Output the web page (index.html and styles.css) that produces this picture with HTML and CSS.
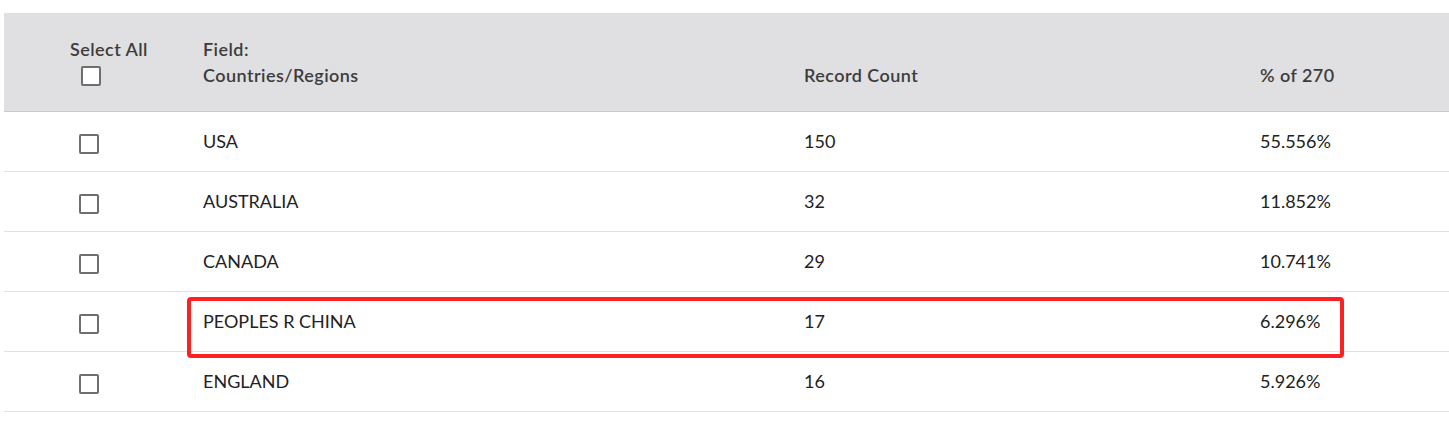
FILE: index.html
```html
<!DOCTYPE html>
<html lang="en">
<head>
<meta charset="utf-8">
<title>Countries/Regions</title>
<link rel="stylesheet" href="styles.css">
</head>
<body>
<div class="wrap">
  <table class="results">
    <thead>
      <tr>
        <th class="c-sel">
          <div class="sel-label">Select All</div>
          <span class="box box-head"></span>
        </th>
        <th class="c-field">Field:<br>Countries/Regions</th>
        <th class="c-count">Record Count</th>
        <th class="c-pct">% of 270</th>
      </tr>
    </thead>
    <tbody>
      <tr>
        <td class="c-sel"><span class="box"></span></td>
        <td class="c-field">USA</td>
        <td class="c-count">150</td>
        <td class="c-pct">55.556%</td>
      </tr>
      <tr>
        <td class="c-sel"><span class="box"></span></td>
        <td class="c-field">AUSTRALIA</td>
        <td class="c-count">32</td>
        <td class="c-pct">11.852%</td>
      </tr>
      <tr>
        <td class="c-sel"><span class="box"></span></td>
        <td class="c-field">CANADA</td>
        <td class="c-count">29</td>
        <td class="c-pct">10.741%</td>
      </tr>
      <tr>
        <td class="c-sel"><span class="box"></span></td>
        <td class="c-field">PEOPLES R CHINA</td>
        <td class="c-count">17</td>
        <td class="c-pct">6.296%</td>
      </tr>
      <tr>
        <td class="c-sel"><span class="box"></span></td>
        <td class="c-field">ENGLAND</td>
        <td class="c-count">16</td>
        <td class="c-pct">5.926%</td>
      </tr>
    </tbody>
  </table>
  <div class="highlight"></div>
</div>
</body>
</html>
```

FILE: styles.css
```css
html, body {
  margin: 0;
  padding: 0;
  background: #ffffff;
}

body {
  font-family: "Lato", "Liberation Sans", sans-serif;
  color: #222222;
}

.wrap {
  position: relative;
  padding: 13px 0 0 4px;
}

.results {
  width: 1445px;
  border-collapse: collapse;
  table-layout: fixed;
}

.results th,
.results td {
  box-sizing: border-box;
  padding: 0;
  text-align: left;
  font-size: 18px;
}

.results thead th {
  background: #e0e0e2;
  color: #3c3c3c;
  font-weight: 600;
  letter-spacing: 0.45px;
  line-height: 26px;
  vertical-align: bottom;
  padding-top: 23px;
  padding-bottom: 23px;
  border-bottom: 1px solid #c9c9cb;
}

.results tbody td {
  height: 60px;
  line-height: 25px;
  vertical-align: middle;
  border-bottom: 1px solid #e1e1e1;
}

.c-sel { width: 199px; }
.c-field { width: 601px; }
.c-count { width: 456px; }
.c-pct { width: auto; }

.results thead .c-sel {
  padding-left: 66px;
}

.sel-label {
  line-height: 26px;
}

.box {
  display: block;
  box-sizing: border-box;
  width: 20px;
  height: 20px;
  border: 2px solid #6e6e6e;
  border-radius: 2px;
  background: #ffffff;
}

.box-head {
  margin: 4px 0 2px 11px;
}

.results tbody .c-sel .box {
  margin: 5px 0 0 75px;
}

.highlight {
  position: absolute;
  left: 187px;
  top: 297px;
  width: 1157px;
  height: 61px;
  box-sizing: border-box;
  border: 4px solid #fd2222;
  border-radius: 4px;
  pointer-events: none;
}
```
